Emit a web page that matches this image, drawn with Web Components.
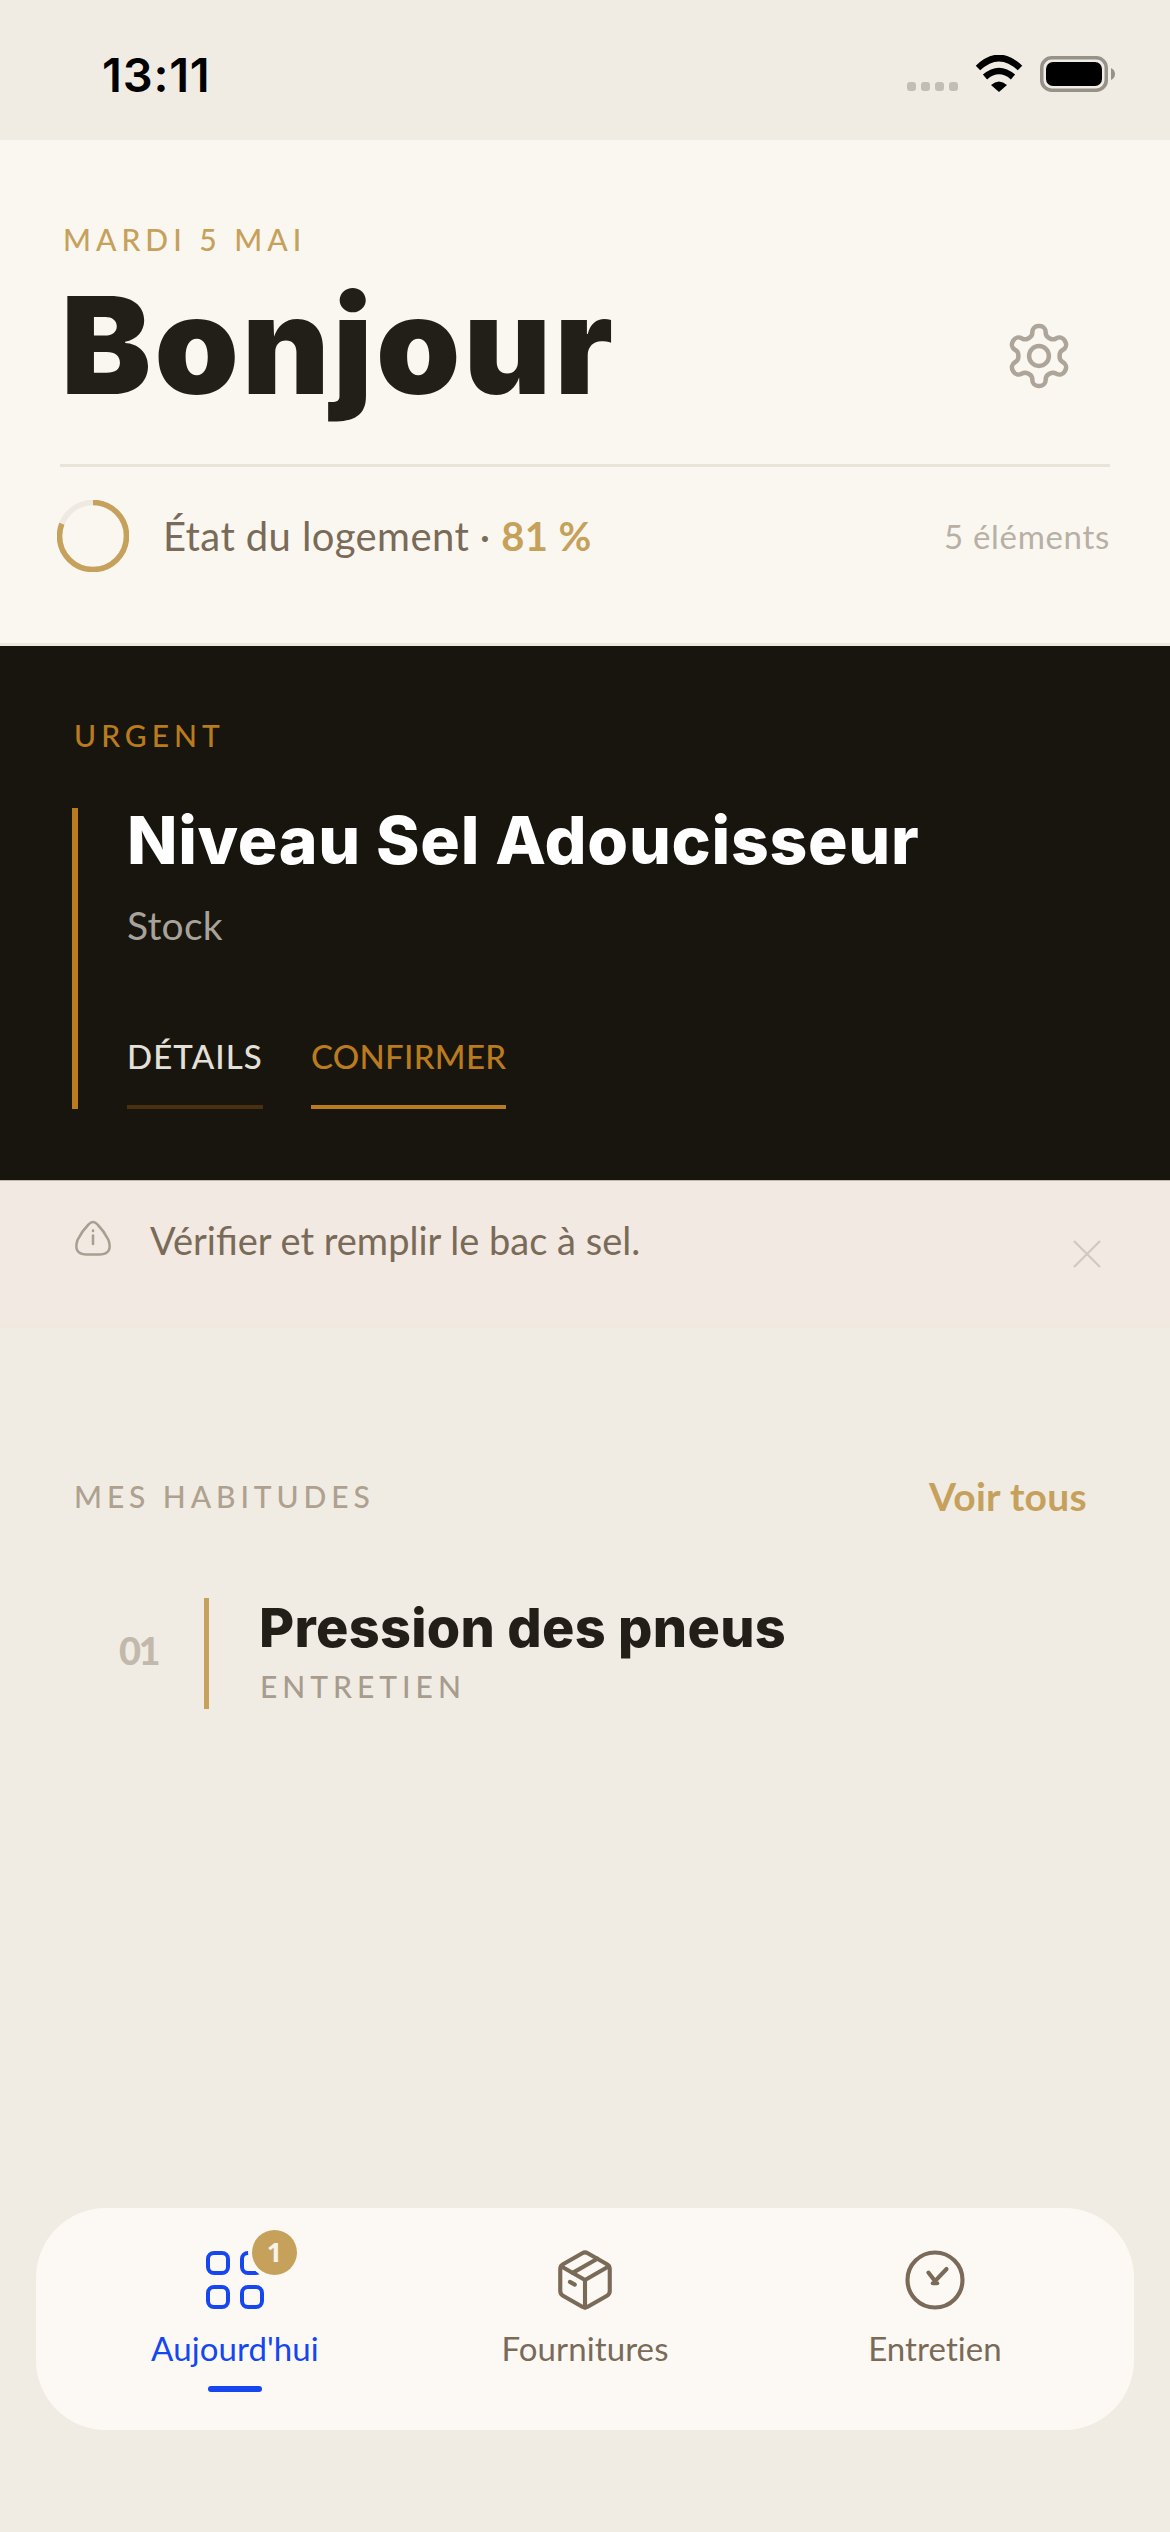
<!DOCTYPE html>
<html lang="fr"><head><meta charset="utf-8"><title>Aujourd'hui</title>
<style>
html,body{margin:0;padding:0;background:#F0ECE4}
body{width:1170px;height:2532px;overflow:hidden;font-family:"Lato","Noto Sans",sans-serif}
app-screen{height:2532px}
</style></head><body>
<app-screen>
  <status-bar></status-bar>
  <home-header date="MARDI 5 MAI" title="Bonjour" label="État du logement · " value="81 %" count="5 éléments"></home-header>
  <urgent-card title="Niveau Sel Adoucisseur" sub="Stock"></urgent-card>
  <notice-strip>Vérifier et remplir le bac à sel.</notice-strip>
  <section-head title="MES HABITUDES" action="Voir tous"></section-head>
  <habit-row num="01" title="Pression des pneus" tag="ENTRETIEN"></habit-row>
  <tab-bar></tab-bar>
</app-screen>
<script>
const POP='"Inter","Roboto",sans-serif';
const NUN='"Lato","Noto Sans",sans-serif';
function def(name,html){
  customElements.define(name,class extends HTMLElement{
    connectedCallback(){
      if(this.shadowRoot)return;
      const a=n=>this.getAttribute(n)||'';
      const r=this.attachShadow({mode:'open'});
      r.innerHTML=html(a);
    }
  });
}
def('app-screen',()=>`<style>:host{display:flex;flex-direction:column;width:1170px;background:#F0ECE4}
::slotted(tab-bar){margin-top:auto}</style><slot></slot>`);

def('status-bar',()=>`<style>
:host{display:flex;height:140px;box-sizing:border-box;padding:0 55px 0 102px;background:#F0ECE4}
.t{font:600 47px/1 "Inter",sans-serif;color:#000;margin-top:51px;letter-spacing:.8px}
.r{margin-left:auto;display:flex;align-items:flex-start;padding-top:55px}
.dots{display:flex;gap:5px;margin-top:27px}.dots i{width:9px;height:9px;border-radius:3px;background:#C2BEB6;display:block}
svg{display:block}
</style><div class="t">13:11</div><div class="r">
<div class="dots"><i></i><i></i><i></i><i></i></div>
<svg style="margin-left:17px" width="48" height="37" viewBox="0 0 48 37"><g fill="none" stroke="#000" stroke-width="6.5"><path d="M3 13Q24-7 45 13"/><path d="M10 22Q24 10 38 22"/></g><path d="M16 30Q24 23 32 30L24 37Z"/></svg>
<svg style="margin-left:17px;margin-top:1px" width="75" height="36" viewBox="0 0 75 36"><rect x="1.75" y="1.75" width="64.5" height="32.5" rx="10" fill="none" stroke="#96928A" stroke-width="3.5"/><rect x="6" y="6" width="56" height="24" rx="7"/><path d="M71 12Q75 14 75 18T71 24Z" fill="#96928A"/></svg>
</div>`);

def('progress-ring',()=>`<style>:host{display:block;width:72px;height:72px}svg{display:block}</style>
<svg width="72" height="72" viewBox="0 0 72 72"><circle cx="36" cy="36" r="33.5" fill="none" stroke="#EEE9E1" stroke-width="5.5"/><circle cx="36" cy="36" r="33.5" fill="none" stroke="#C6A15B" stroke-width="5.5" pathLength="100" stroke-dasharray="81 100" transform="rotate(-90 36 36)"/></svg>`);

def('home-header',a=>`<style>
:host{display:block;height:506px;box-sizing:border-box;background:#FAF7F1;border-bottom:3px solid #EDE7DD;padding:83px 60px 0}
.d{font:500 30px/32px ${NUN};letter-spacing:5px;color:#C6A15B;margin-left:3px}
.row{display:flex;align-items:flex-start;height:206px}
h1{margin:5px 0 0 1px;font:900 135px/170px ${POP};letter-spacing:3.2px;color:#221E18}
.g{margin-left:auto;margin-right:35px;margin-top:65px}
.g svg{display:block}
.div{height:3px;background:#E9E3D8;margin-top:3px}
.st{display:flex;align-items:center;margin-top:33px;margin-left:-3px}
.l{font:400 40px/44px ${NUN};letter-spacing:.4px;color:#7A6A58;margin-left:34px}
.l b{font-weight:700;color:#C6A15B}
.c{margin-left:auto;font:400 33px/44px ${NUN};letter-spacing:.7px;color:#B8B0A4}
</style><div class="d">${a('date')}</div>
<div class="row"><h1>${a('title')}</h1>
<div class="g"><svg width="72" height="72" viewBox="0 0 24 24" fill="none" stroke="#ADA599" stroke-width="1.5" stroke-linecap="round" stroke-linejoin="round"><path d="M12.22 2h-.44a2 2 0 0 0-2 2v.18a2 2 0 0 1-1 1.73l-.43.25a2 2 0 0 1-2 0l-.15-.08a2 2 0 0 0-2.73.73l-.22.38a2 2 0 0 0 .73 2.73l.15.1a2 2 0 0 1 1 1.72v.51a2 2 0 0 1-1 1.74l-.15.09a2 2 0 0 0-.73 2.73l.22.38a2 2 0 0 0 2.73.73l.15-.08a2 2 0 0 1 2 0l.43.25a2 2 0 0 1 1 1.73V20a2 2 0 0 0 2 2h.44a2 2 0 0 0 2-2v-.18a2 2 0 0 1 1-1.73l.43-.25a2 2 0 0 1 2 0l.15.08a2 2 0 0 0 2.73-.73l.22-.39a2 2 0 0 0-.73-2.73l-.15-.08a2 2 0 0 1-1-1.74v-.5a2 2 0 0 1 1-1.74l.15-.09a2 2 0 0 0 .73-2.73l-.22-.38a2 2 0 0 0-2.73-.73l-.15.08a2 2 0 0 1-2 0l-.43-.25a2 2 0 0 1-1-1.73V4a2 2 0 0 0-2-2z"/><circle cx="12" cy="12" r="3.3"/></svg></div></div>
<div class="div"></div>
<div class="st"><progress-ring></progress-ring><div class="l">${a('label')}<b>${a('value')}</b></div><div class="c">${a('count')}</div></div>`);

def('urgent-card',a=>`<style>
:host{display:block;height:534px;box-sizing:border-box;background:#18150E;padding:73px 72px 0}
.u{font:500 30px/32px ${NUN};letter-spacing:5px;color:#B97B1E;margin-left:2px}
.b{margin-top:57px;border-left:6px solid #B97B1E;height:301px;box-sizing:border-box;padding-left:49px;display:flex;flex-direction:column}
h2{margin:-6px 0 0;font:800 66px/76px ${POP};letter-spacing:.7px;color:#fff}
.s{font:400 39px/44px ${NUN};letter-spacing:.2px;color:#A8A39A;margin-top:25px;margin-left:0}
.act{display:flex;gap:48px;margin-top:auto}
.a{font:500 33px/40px ${NUN};height:73px;box-sizing:border-box;border-bottom:4px solid #4A3011;color:#E4E0D8;letter-spacing:1.1px}
.a.p{color:#B97B1E;border-color:#B97B1E;letter-spacing:.3px}
</style><div class="u">URGENT</div>
<div class="b"><h2>${a('title')}</h2><div class="s">${a('sub')}</div>
<div class="act"><div class="a">DÉTAILS</div><div class="a p">CONFIRMER</div></div></div>`);

def('notice-strip',()=>`<style>
:host{display:flex;height:148px;box-sizing:border-box;background:#F1E9E2;border-top:1px solid #BDB8B0;border-bottom:3px solid #EFE9DE;padding:39px 69px 0 74px}
svg{display:block;flex:none}
.t{font:400 38px/44px ${NUN};color:#7A6A58;margin-left:38px;margin-top:-2px}
.x{margin-left:auto;margin-top:20px}
</style><svg width="38" height="36" viewBox="0 0 38 36" fill="none" stroke="#A89F92" stroke-width="2.5" stroke-linecap="round"><path d="M14.5 4.5Q19-.5 23.5 4.5 30 11 34.5 20 39 34 26 34.500H12Q-1 34 3.500 20 8 11 14.5 4.500Z"/><path d="M19 15.500V24"/><path d="M19 10.500v.5"/></svg>
<div class="t"><slot></slot></div>
<svg class="x" width="28" height="28" viewBox="0 0 28 28" fill="none" stroke="#CFC9BF" stroke-width="2.2"><path d="M1 1 27 27M27 1 1 27"/></svg>`);

def('section-head',a=>`<style>
:host{display:flex;justify-content:space-between;align-items:flex-start;padding:148px 83px 0 74px}
.h{font:500 30px/40px ${NUN};letter-spacing:4.9px;color:#AFA18F}
.v{font:700 39px/46px ${NUN};letter-spacing:.3px;color:#C6A15B;margin-top:-3px}
</style><div class="h">${a('title')}</div><div class="v">${a('action')}</div>`);

def('habit-row',a=>`<style>
:host{display:flex;align-items:flex-start;margin:79px 0 0 119px;height:112px}
.n{font:900 38px/1 ${NUN};color:#C2B9AC;width:85px;letter-spacing:-2.5px;margin-top:33px}
.m{border-left:5px solid #C6A15B;height:111px;box-sizing:border-box;padding-left:50px}
h3{margin:1px 0 0;font:800 54px/58px ${POP};letter-spacing:.3px;color:#221E18}
.t{font:500 30px/36px ${NUN};letter-spacing:5px;color:#A79C8E;margin:11px 0 0 1px}
</style><div class="n">${a('num')}</div><div class="m"><h3>${a('title')}</h3><div class="t">${a('tag')}</div></div>`);

def('tab-bar',()=>`<style>
:host{display:flex;height:222px;margin:0 36px 102px;padding:0 24px;box-sizing:border-box;border-radius:70px;background:#FCF9F4}
</style>
<tab-item label="Aujourd'hui" active="1" badge="1"><svg width="60" height="60" viewBox="0 0 60 60" fill="none" stroke="#1546F0" stroke-width="4"><rect x="3" y="3" width="20" height="20" rx="6"/><rect x="37" y="3" width="20" height="20" rx="6"/><rect x="3" y="37" width="20" height="20" rx="6"/><rect x="37" y="37" width="20" height="20" rx="6"/></svg></tab-item>
<tab-item label="Fournitures"><svg width="66" height="66" viewBox="0 0 24 24" fill="none" stroke="#7A6A58" stroke-width="1.500" stroke-linecap="round" stroke-linejoin="round"><path d="M11 21.730a2 2 0 0 0 2 0l7-4A2 2 0 0 0 21 16V8a2 2 0 0 0-1-1.730l-7-4a2 2 0 0 0-2 0l-7 4A2 2 0 0 0 3 8v8a2 2 0 0 0 1 1.730z"/><path d="M12 22V12"/><path d="M3.290 7 12 12l8.710-5"/><path d="m16.500 4.270-9 5.150"/><path d="m6.500 12.700 1.800 1"/></svg></tab-item>
<tab-item label="Entretien"><svg width="66" height="66" viewBox="0 0 24 24" fill="none" stroke="#7A6A58" stroke-width="1.500" stroke-linecap="round"><circle cx="12" cy="12" r="10"/><path d="M9.600 9.300 12 12.400 16.200 8"/><path d="M11.200 13.200h1.600"/></svg></tab-item>`);

customElements.define('tab-item',class extends HTMLElement{
  connectedCallback(){
    if(this.shadowRoot)return;
    const on=this.hasAttribute('active');
    const badge=this.getAttribute('badge');
    const r=this.attachShadow({mode:'open'});
    r.innerHTML=`<style>
:host{flex:1;display:flex;flex-direction:column;align-items:center}
.i{height:66px;width:66px;margin-top:39px;display:flex;align-items:center;justify-content:center;position:relative}
.bd{position:absolute;left:50px;top:-17px;width:45px;height:45px;border-radius:50%;background:#C6A15B;box-shadow:0 0 0 4px #FCF9F4;color:#F8F3E8;font:700 27px/43px "Noto Sans",sans-serif;text-align:center}
.l{font:400 33px/44px ${NUN};font-variant-ligatures:none;letter-spacing:.1px;margin-top:13px;color:${on?'#1546F0':'#7A6A58'}}
.u{width:54px;height:6px;border-radius:3px;background:#1546F0;margin-top:16px}
</style><div class="i"><slot></slot>${badge?`<div class="bd">${badge}</div>`:''}</div><div class="l">${this.getAttribute('label')}</div>${on?'<div class="u"></div>':''}`;
  }
});
</script>
</body></html>
